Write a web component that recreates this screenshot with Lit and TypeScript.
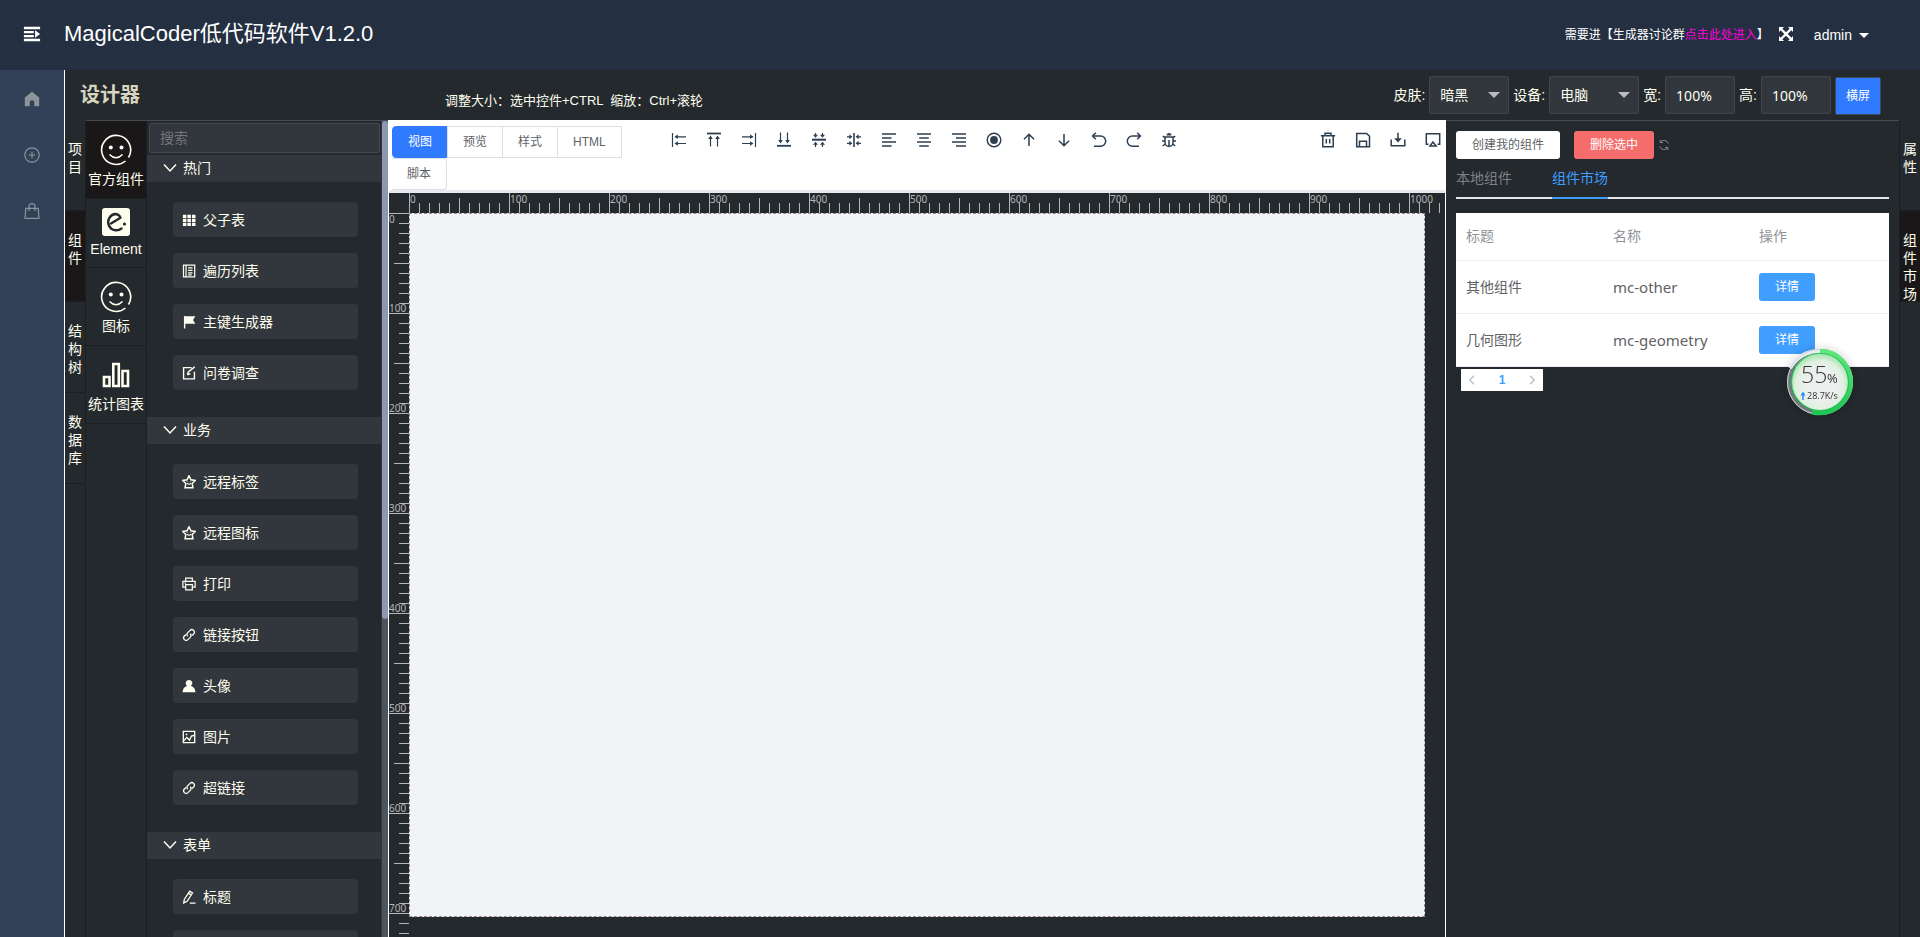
import { LitElement, html, css, svg, nothing } from "lit";
import { customElement, state } from "lit/decorators.js";
import { classMap } from "lit/directives/class-map.js";

const glyphs: Record<string, unknown> = {
  fold: svg`<path d="M1 1.5h18v2.8H1zM1 6.2h11v2.6H1zM1 10.6h11v2.6H1zM1 14.8h18v2.8H1zM13.4 5.4l5.6 4.2-5.6 4.2z" fill="currentColor" stroke="none"/>`,
  home: svg`<path d="M8 .8L15.2 6.6V15.200H10.200V10.600Q8 8 5.800 10.600V15.200H.8V6.600z" fill="currentColor" stroke="none"/>`,
  plus: svg`<circle cx="8" cy="8" r="7.200"/><path d="M8 4.700v6.600M4.700 8h6.600"/>`,
  bag: svg`<path d="M1.800 5.300h12.400l.8 10H1z"/><path d="M5 8V3.600a3 3 0 0 1 6 0V8"/>`,
  full: svg`<path d="M1 1h5L4.300 2.700 8 6.300l3.700-3.600L10 1h5v5l-1.700-1.700L9.700 8l3.600 3.700L15 10v5h-5l1.700-1.700L8 9.700l-3.700 3.600L6 15H1v-5l1.700 1.700L6.300 8 2.700 4.300 1 6z" fill="currentColor" stroke="none"/>`,
  chevron: svg`<path d="M2 4.500l6 6.500 6-6.500" stroke-width="1.500"/>`,
  grid: svg`<path d="M1 2h4v3.600H1zM6.200 2h4v3.600h-4zM11.400 2h4v3.600h-4zM1 6.600h4v3.600H1zM6.200 6.600h4v3.600h-4zM11.400 6.600h4v3.600h-4zM1 11.200h4v3.600H1zM6.200 11.200h4v3.600h-4zM11.400 11.200h4v3.600h-4z" fill="currentColor" stroke="none"/>`,
  list: svg`<path d="M1.700 1.200h12.800v13.600H1.700zM4.600 1.200v13.600M7 4.500h5M7 7.300h5M7 10.100h5M7 12.400h4" stroke-width="1.400"/>`,
  flag: svg`<path d="M2.200 1h1.600v14.500H2.200zM3.800 1.500h11.400l-2.600 4.300 2.600 4.300H3.800z" fill="currentColor" stroke="none"/>`,
  edit: svg`<path d="M11 1.900H1.800v12.800h12.400V6.500M6.200 9.600l1-2.800L14.600 1M6 10.200l3.600-1.400" stroke-width="1.600"/>`,
  star: svg`<path d="M8 .8l2.200 4.600 5 .8-3.600 3.500.9 5H3.500l.9-5L.8 6.200l5-.8z" stroke-width="1.700"/><path d="M5.700 9.300q2.300 2.400 4.600 0M6 7.300v.8M10 7.300v.8" stroke-width="1.300"/>`,
  print: svg`<path d="M4.200 5V1.200h7.600V5M4.200 11.500H1V5h14v6.500h-3.200M4.200 8.800h7.600v6H4.200zM3 7h1.500" stroke-width="1.400"/>`,
  link: svg`<path d="M6.600 9.400a3 3 0 0 1 0-4.100l2.600-2.600a2.900 2.900 0 0 1 4.100 4.100l-1.700 1.700M9.400 6.600a3 3 0 0 1 0 4.100l-2.600 2.600a2.900 2.900 0 0 1-4.100-4.100l1.700-1.700" stroke-width="1.500"/>`,
  person: svg`<path d="M8 1a3.900 3.900 0 0 1 2.300 7C13 8.800 15.200 11 15.400 15H.6C.8 11 3 8.800 5.700 8A3.900 3.900 0 0 1 8 1z" fill="currentColor" stroke="none"/>`,
  image: svg`<path d="M1.500 1.500h13v13h-13zM2 12.500l3.400-4 3.200 3 2.200-4.500L14 6" stroke-width="1.500"/><circle cx="5.200" cy="5" r="1" fill="currentColor" stroke="none"/>`,
  pen: svg`<path d="M2 14.800l.6-4L8.800 1.400l3.200 2.100-6.200 9.400zM7.400 3.600l3.200 2.100M9 15h6.500" stroke-width="1.500"/>`,
  alignLeft: svg`<path d="M1.500 1v14M4.500 4.800H15M4.500 11.500H15" /><path d="M3.500 4.800l3.400-2.300v4.600zM3.500 11.500l3.400-2.300v4.600z" fill="currentColor" stroke="none"/>`,
  alignTop: svg`<path d="M1 1.500h14" stroke-width="1.800"/><path d="M4.500 5v9.500M11.500 5v9.500"/><path d="M4.500 3.600L2.200 7h4.600zM11.500 3.600L9.200 7h4.600z" fill="currentColor" stroke="none"/>`,
  alignRight: svg`<path d="M14.500 1v14M1 4.800h10.500M1 11.500h10.500"/><path d="M12.500 4.800L9.100 2.500v4.600zM12.500 11.500L9.100 9.200v4.600z" fill="currentColor" stroke="none"/>`,
  alignBottom: svg`<path d="M1 13.800h14" stroke-width="1.800"/><path d="M4.500.5V10M11.500.5V10"/><path d="M4.500 11.400L2.200 8h4.600zM11.500 11.400L9.200 8h4.600z" fill="currentColor" stroke="none"/>`,
  midH: svg`<path d="M1 7.700h14" stroke-width="2"/><path d="M4.500 1v3M11.500 1v3M4.500 15v-3M11.500 15v-3"/><path d="M4.500 5.800L2 2.800h5zM11.500 5.800L9 2.800h5zM4.500 9.800l-2.500 3h5zM11.500 9.800l-2.500 3h5z" fill="currentColor" stroke="none"/>`,
  midV: svg`<path d="M8 1v14" stroke-width="1.600"/><path d="M1 4.800h3M1 11.300h3M15 4.800h-3M15 11.300h-3"/><path d="M6.400 4.800l-3-2.500v5zM6.400 11.300l-3-2.500v5zM9.600 4.800l3-2.500v5zM9.600 11.300l3-2.500v5z" fill="currentColor" stroke="none"/>`,
  textLeft: svg`<path d="M1 2h14M1 6h9.500M1 10h14M1 14h9.500" stroke-width="1.500"/>`,
  textCenter: svg`<path d="M1 2h14M3.200 6h9.600M1 10h14M3.200 14h9.600" stroke-width="1.500"/>`,
  textRight: svg`<path d="M1 2h14M5 6h10M1 10h14M5 14h10" stroke-width="1.500"/>`,
  record: svg`<circle cx="8" cy="8" r="6.800" stroke-width="1.400"/><circle cx="8" cy="8" r="3.900" fill="currentColor" stroke="none"/>`,
  up: svg`<path d="M8 14V2.500M3 7.300l5-5 5 5" stroke-width="1.500"/>`,
  down: svg`<path d="M8 2v11.500M3 8.700l5 5 5-5" stroke-width="1.500"/>`,
  undo: svg`<path d="M4.800.8L1.600 4l3.200 3.200M2 4h7.600a5.100 5.100 0 0 1 0 10.200H3" stroke-width="1.500"/>`,
  redo: svg`<path d="M11.200.8L14.400 4l-3.200 3.200M14 4H6.400a5.100 5.100 0 0 0 0 10.200H13" stroke-width="1.500"/>`,
  bug: svg`<path d="M5.500 3.600a2.500 2.500 0 0 1 5 0z" fill="currentColor" stroke="none"/><path d="M4 5h8v5.500a4 4 0 0 1-8 0zM1.800 4l2.200 1.800M14.200 4L12 5.800M1 9h3M12 9h3M1.800 14l2.400-2M14.200 14l-2.400-2M8 8v6" stroke-width="1.500"/>`,
  trash: svg`<path d="M.8 3.700h14.400M5 3.500V1.200h6v2.300M2.800 3.700v11h10.400v-11M6.300 7v4.500M9.700 7v4.500" stroke-width="1.500"/>`,
  save: svg`<path d="M1.700 1.500h10l2.800 2.800v10.400H1.700zM4.500 14.500V9.200h7v5.300" stroke-width="1.500"/>`,
  download: svg`<path d="M1.200 7.500v6.200h13.600V7.500M8 .8V7" stroke-width="1.500"/><path d="M8 10.500L4.200 6.300h7.600z" fill="currentColor" stroke="none"/>`,
  screen: svg`<path d="M3.500 12.300H1.300V1.800h13.400v10.500h-2.200" stroke-width="1.500"/><path d="M8 10l3.100 4H4.900z" stroke-width="1.500"/>`,
  refresh: svg`<path d="M2.200 9.800A6 6 0 0 0 13 11.400M13.800 6.200A6 6 0 0 0 3 4.600M3 1.200v3.600h3.600M13 14.800v-3.600H9.400" stroke-width="1.200"/>`,
  prev: svg`<path d="M10.500 2.500L5 8l5.500 5.500" stroke-width="2"/>`,
  next: svg`<path d="M5.500 2.500L11 8l-5.500 5.500" stroke-width="2"/>`,
};

const icon = (name: string, cls = "i16") => html`<svg
  class=${cls}
  viewBox=${name === "fold" ? "0 0 20 19" : "0 0 16 16"}
  fill="none"
  stroke="currentColor"
  stroke-width="1.2"
  aria-hidden="true"
>${glyphs[name]}</svg>`;

const smile = html`<svg class="kit-icon" viewBox="0 0 32 32" fill="none" stroke="currentColor" stroke-width="1.600" aria-hidden="true">
  <path d="M25.500 27A14.500 14.500 0 1 1 28.500 23.500"/><path d="M9.500 20.500q6.500 6.500 13 0"/>
  <circle cx="10.800" cy="13.500" r="2" fill="currentColor" stroke="none"/><circle cx="21.500" cy="13.500" r="2" fill="currentColor" stroke="none"/>
</svg>`;
const elementMark = html`<svg class="kit-icon small" viewBox="0 0 28 28" aria-hidden="true">
  <rect width="28" height="28" rx="3" fill="currentColor"/>
  <path d="M9 15.500L18.500 9.800Q17 6 13 6A8.200 8.200 0 1 0 19.500 20.500" fill="none" stroke="#24292d" stroke-width="2.400" stroke-linecap="round" stroke-linejoin="round"/>
  <circle cx="22.500" cy="16" r="1.600" fill="#24292d"/>
</svg>`;
const bars = html`<svg class="kit-icon" viewBox="0 0 32 32" fill="none" stroke="currentColor" stroke-width="2.600" aria-hidden="true">
  <path d="M4 18h5.500v9H4zM13.300 5h5.500v22h-5.500zM22.500 12H28v15h-5.500z"/>
</svg>`;

@customElement("app-root")
export class AppRoot extends LitElement {
  @state() private view = "视图";
  @state() private closed: string[] = [];
  @state() private across = 0;
  @state() private down = 0;

  private watcher = new ResizeObserver(() => this.measure());

  private views = ["视图", "预览", "样式", "HTML", "脚本"];
  private tools = [
    ["alignLeft", "左对齐"], ["alignTop", "上对齐"], ["alignRight", "右对齐"], ["alignBottom", "下对齐"],
    ["midH", "垂直居中"], ["midV", "水平居中"], ["textLeft", "文字居左"], ["textCenter", "文字居中"],
    ["textRight", "文字居右"], ["record", "选中"], ["up", "上移"], ["down", "下移"],
    ["undo", "撤销"], ["redo", "重做"], ["bug", "调试"],
  ];
  private files = [["trash", "清空"], ["save", "保存"], ["download", "下载"], ["screen", "预览"]];
  private kits = [
    { name: "官方组件", art: smile, on: true },
    { name: "Element", art: elementMark, on: false },
    { name: "图标", art: smile, on: false },
    { name: "统计图表", art: bars, on: false },
  ];
  private groups = [
    { name: "热门", items: [["grid", "父子表"], ["list", "遍历列表"], ["flag", "主键生成器"], ["edit", "问卷调查"]] },
    {
      name: "业务",
      items: [["star", "远程标签"], ["star", "远程图标"], ["print", "打印"], ["link", "链接按钮"], ["person", "头像"], ["image", "图片"], ["link", "超链接"]],
    },
    { name: "表单", items: [["pen", "标题"], ["", ""]] },
  ];
  private rows = [["其他组件", "mc-other"], ["几何图形", "mc-geometry"]];

  static styles = css`
    :host { display: block; height: 100vh; font: 14px/18px "Liberation Sans", "Noto Sans CJK SC", sans-serif; color: #fffff0; }
    * { box-sizing: border-box; }
    button, input, select { font: inherit; color: inherit; margin: 0; padding: 0; border: 0; background: none; border-radius: 0; }
    button { cursor: pointer; }
    svg { display: block; flex: none; }
    .i14 { width: 14px; height: 14px; }
    .i16 { width: 16px; height: 16px; }
    .i18 { width: 18px; height: 18px; }
    .i12 { width: 12px; height: 12px; }
    .page { height: 100%; display: flex; flex-direction: column; overflow: hidden; background: #24292d; }

    .top { flex: none; height: 70px; background: #242f42; color: #fff; display: flex; align-items: center; padding: 0 51px 2px 23px; }
    .brand { margin: 0 auto 0 23px; font-size: 22px; line-height: 30px; font-weight: 400; }
    .notice { font-size: 12px; padding-top: 2px; }
    .notice a { color: #f0d; text-decoration: none; }
    .top .max { margin: 0 20px 0 9px; }
    .user { display: flex; align-items: center; gap: 7px; padding-top: 2px; }
    .caret { border: 5px solid transparent; border-top-color: #fff; border-bottom: 0; }

    .body { flex: 1; min-height: 0; display: flex; }
    .nav { flex: none; width: 64px; padding-top: 1px; background: #324157; color: #909399; display: flex; flex-direction: column; }
    .nav a { height: 56px; display: grid; place-items: center; color: inherit; }
    .designer { flex: 1; min-width: 0; border-left: 1px solid #fff; display: flex; flex-direction: column; }
    .bar { flex: none; height: 50px; display: flex; align-items: center; gap: 4px; padding: 0 39px 0 15px; }
    .bar h1 { margin: 0; width: 300px; font-size: 20px; line-height: 26px; color: #d8d5c0; }
    .tip { margin: 12px auto 0 0; padding-left: 61px; font-size: 13px; white-space: pre; }
    .pick { position: relative; }
    .pick::after { content: ""; position: absolute; right: 9px; top: 16px; border: 6px solid transparent; border-top-color: #bbb; border-bottom: 0; pointer-events: none; }
    .field { height: 38px; background: #32363d; border: 1px solid #414549; border-radius: 2px; padding: 0 10px; appearance: none; display: block; }
    input.field { font-family: "Noto Sans", sans-serif; }
    .w70 { width: 70px; }
    .w80 { width: 80px; }
    .w90 { width: 90px; }
    .wide { width: 46px; height: 38px; margin-top: 2px; font-size: 12px; color: #fff; background: #307aff; border: 1px solid #3c4a5c; border-radius: 2px; }

    .work { flex: 1; min-height: 0; display: flex; }
    .side { flex: none; width: 21px; border-right: 1px solid #1b1f21; }
    .side.right { border-right: 0; border-left: 1px solid #1b1f21; }
    .side button { width: 20px; height: 91px; padding: 20px 3px 0; text-align: center; border-bottom: 1px solid #1b1f21; display: flex; align-items: flex-start; line-height: 18px; word-break: break-all; }
    .side button.on { background: #191717; }

    .kits { flex: none; width: 61px; border-top: 1px solid #484b50; border-right: 1px solid #1b1f21; }
    .kits button { width: 100%; height: 78px; padding-top: 2px; display: flex; flex-direction: column; align-items: center; justify-content: center; gap: 4px; border-bottom: 1px solid #1b1f21; white-space: nowrap; }
    .kits button.low { height: 69px; padding-top: 0; }
    .kits button.on { background: #191717; }
    .kit-icon { width: 32px; height: 32px; }
    .kit-icon.small { width: 28px; height: 28px; }

    .parts { flex: none; width: 241px; border-top: 1px solid #484b50; display: flex; }
    .list { flex: 1; overflow: hidden; border-right: 1px solid #32363d; }
    .search { display: block; width: calc(100% - 3px); height: 30px; margin: 2px; padding: 0 10px; background: #32363d; border: 1px solid #44484d; border-radius: 2px; }
    .search::placeholder { color: #777; opacity: 1; }
    .fold { width: 100%; height: 27px; background: #32363d; display: flex; align-items: center; gap: 5px; padding: 0 0 2px 15px; }
    .items { padding: 20px 23px 27px 26px; display: grid; gap: 16px; }
    .part { height: 35px; background: #32363d; border-radius: 4px; display: flex; align-items: center; gap: 7px; padding-left: 9px; }
    .track { flex: none; width: 6px; background: #4b555b; }
    .thumb { height: 61%; background: #8c97b0; border-radius: 4px; }

    .stage { flex: 1; min-width: 0; border: 1px solid #fff; border-width: 0 1px; display: flex; flex-direction: column; }
    .tools { flex: none; background: #fff; color: #2c3e50; border-bottom: 3px solid #e6eaee; display: flex; padding: 6px 4px 0 3px; }
    .views { flex: 0 0 25%; display: flex; flex-wrap: wrap; margin-right: 17px; }
    .views button { height: 32px; padding: 0 15px; font-size: 12px; color: #606266; border: 1px solid #dcdfe6; margin-right: -1px; }
    .views button:first-child { border-radius: 4px 0 0 4px; }
    .views button:last-child { border-radius: 0 4px 4px 0; border-left: 0; }
    .views button.on { background: #307aff; border-color: #307aff; color: #fff; }
    .strip { display: flex; gap: 19px; height: 28px; align-items: center; }
    .strip.end { margin-left: auto; }
    .board { flex: 1; min-height: 0; display: grid; grid-template: 20px minmax(0, 1fr) / 20px minmax(0, 1fr); font: 10px/10px "Noto Sans", sans-serif; color: #b4b6b8; }
    .ruler { overflow: hidden; display: flex; background-repeat: no-repeat; }
    .ruler.x {
      grid-column: 2;
      background-image: repeating-linear-gradient(90deg, #b4b6b8 0 1px, transparent 1px 10px), repeating-linear-gradient(90deg, #b4b6b8 0 1px, transparent 1px 50px), repeating-linear-gradient(90deg, #b4b6b8 0 1px, transparent 1px 100px);
      background-size: 100% 10px, 100% 15px, 100% 20px;
      background-position: bottom;
    }
    .ruler.y {
      flex-direction: column;
      background-image: repeating-linear-gradient(#b4b6b8 0 1px, transparent 1px 10px), repeating-linear-gradient(#b4b6b8 0 1px, transparent 1px 50px), repeating-linear-gradient(#b4b6b8 0 1px, transparent 1px 100px);
      background-size: 10px 100%, 15px 100%, 20px 100%;
      background-position: right;
    }
    .ruler.x span { flex: 0 0 100px; padding: 1px 0 0 1px; }
    .ruler.y div { flex: 0 0 100px; padding-top: 1px; display: flex; flex-direction: column; }
    .ruler.y .end { margin-top: auto; }
    .canvas { background: #f1f3f7; border: 1px dashed #988; margin: 0 20px 20px 0; }

    .props { flex: none; width: 453px; border-top: 1px solid #484b50; padding: 10px; }
    .acts { display: flex; align-items: center; gap: 14px; }
    .btn { height: 28px; padding: 0 16px; font-size: 12px; border-radius: 3px; background: #fff; color: #606266; }
    .btn.red { background: #f56c6c; color: #fff; }
    .btn.blue { background: #409eff; color: #fff; display: block; }
    .reload { margin-left: -10px; color: #909399; }
    .tabs { display: flex; gap: 40px; border-bottom: 2px solid #e4e7ed; height: 40px; margin-bottom: 14px; }
    .tabs button { height: 40px; color: #7d8086; border-bottom: 2px solid transparent; }
    .tabs button.on { color: #409eff; border-color: #409eff; }
    table { width: 100%; table-layout: fixed; border-collapse: collapse; background: #fff; color: #606266; }
    th { height: 47px; font-weight: 400; color: #909399; }
    td { height: 53px; }
    th, td { text-align: left; padding: 0 10px; border-bottom: 1px solid #ebeef5; }
    .c1 { width: 147px; }
    .c2 { width: 146px; }
    .code { font: 15px/18px "Noto Sans", sans-serif; }
    .pager { display: flex; align-items: center; margin: 2px 0 0 5px; background: #fff; height: 22px; width: 82px; justify-content: space-between; padding: 0 5px; color: #c0c4cc; }
    .pager b { font-size: 12px; color: #409eff; }

    .meter { position: fixed; right: 58px; top: 340px; width: 84px; height: 84px; }
    .meter text { font-family: "Open Sans", sans-serif; fill: #333; }
    .num { font-size: 23px; font-weight: 300; }
    .pct { font-size: 13px; }
    .rate { font-size: 9px; }
  `;

  firstUpdated() {
    this.watcher.observe(this.renderRoot.querySelector(".board")!);
    this.measure();
  }

  disconnectedCallback() {
    super.disconnectedCallback();
    this.watcher.disconnect();
  }

  private measure() {
    const board = this.renderRoot.querySelector(".board") as HTMLElement;
    this.across = Math.ceil((board.clientWidth - 50) / 100);
    this.down = Math.floor((board.clientHeight - 20) / 100);
  }

  private toggle(name: string) {
    this.closed = this.closed.includes(name) ? this.closed.filter((n) => n !== name) : [...this.closed, name];
  }

  private sideTabs(names: string[], active: string, cls: string) {
    return html`<nav class="side ${cls}">
      ${names.map((n) => html`<button class=${classMap({ on: n === active })}>${n}</button>`)}
    </nav>`;
  }

  private parts() {
    return html`<section class="parts">
      <div class="list">
        <input class="search" type="text" placeholder="搜索" aria-label="搜索" />
        ${this.groups.map((g) => html`
          <button class="fold" @click=${() => this.toggle(g.name)}>${icon("chevron")}${g.name}</button>
          ${this.closed.includes(g.name) ? nothing : html`<div class="items">
            ${g.items.map(([i, n]) => html`<button class="part">${icon(i, "i14")}${n}</button>`)}
          </div>`}
        `)}
      </div>
      <div class="track"><div class="thumb"></div></div>
    </section>`;
  }

  private stage() {
    const marks = (n: number) => Array.from({ length: n }, (_, i) => i * 100);
    return html`<main class="stage">
      <div class="tools">
        <div class="views">
          ${this.views.map((v) => html`<button class=${classMap({ on: v === this.view })} @click=${() => (this.view = v)}>${v}</button>`)}
        </div>
        <div class="strip">${this.tools.map(([i, t]) => html`<button aria-label=${t}>${icon(i)}</button>`)}</div>
        <div class="strip end">${this.files.map(([i, t]) => html`<button aria-label=${t}>${icon(i)}</button>`)}</div>
      </div>
      <div class="board">
        <div class="ruler x">${marks(this.across).map((m) => html`<span>${m}</span>`)}</div>
        <div class="ruler y">
          ${marks(this.down).map((m) => html`<div>${m === 0 ? html`<span>0</span>` : nothing}<span class="end">${m + 100}</span></div>`)}
        </div>
        <div class="canvas"></div>
      </div>
    </main>`;
  }

  private props() {
    return html`<aside class="props">
      <div class="acts">
        <button class="btn">创建我的组件</button>
        <button class="btn red">删除选中</button>
        <button class="reload" aria-label="刷新">${icon("refresh", "i12")}</button>
      </div>
      <div class="tabs"><button>本地组件</button><button class="on">组件市场</button></div>
      <table>
        <thead><tr><th class="c1">标题</th><th class="c2">名称</th><th>操作</th></tr></thead>
        <tbody>
          ${this.rows.map(([t, c]) => html`<tr><td>${t}</td><td class="code">${c}</td><td><button class="btn blue">详情</button></td></tr>`)}
        </tbody>
      </table>
      <div class="pager">
        <button aria-label="上一页">${icon("prev", "i12")}</button><b>1</b><button aria-label="下一页">${icon("next", "i12")}</button>
      </div>
    </aside>`;
  }

  private meter() {
    return html`<svg class="meter" viewBox="0 0 84 84" role="img" aria-label="55%">
      <defs>
        <radialGradient id="face" cy="0.55"><stop offset="0.5" stop-color="#eef0ef"/><stop offset="0.85" stop-color="#e0f0e0"/><stop offset="1" stop-color="#b4e8bc"/></radialGradient>
        <radialGradient id="halo"><stop offset="0.75" stop-color="#000" stop-opacity="0.1"/><stop offset="1" stop-color="#000" stop-opacity="0"/></radialGradient>
        <linearGradient id="arc" x2="0" y2="1"><stop stop-color="#5ee87a"/><stop offset="1" stop-color="#1fc653"/></linearGradient>
      </defs>
      <circle cx="42" cy="42" r="41" fill="url(#halo)"/>
      <circle cx="42" cy="42" r="31" fill="none" stroke="#75797e" stroke-width="4"/>
      <path d="M12 28A33 33 0 0 1 42 11" fill="none" stroke="#e8eef4" stroke-width="4"/>
      <circle cx="42" cy="42" r="32.500" fill="none" stroke="#d0d2d4"/>
      <path d="M42 11a31 31 0 1 1-8 61" fill="none" stroke="url(#arc)" stroke-width="4.500"/>
      <circle cx="42" cy="42" r="28.500" fill="url(#face)" stroke="#22c556" stroke-width="1.200"/>
      <text class="num" x="23" y="43">55</text><text class="pct" x="49" y="43">%</text>
      <path d="M25 60v-6" stroke="#2d8cf0" stroke-width="1.500"/><path d="M25 51.500l-2.500 4h5z" fill="#2d8cf0"/>
      <text class="rate" x="29" y="59">28.7K/s</text>
    </svg>`;
  }

  render() {
    return html`<div class="page">
      <header class="top">
        <button aria-label="折叠菜单">${icon("fold", "i18")}</button>
        <p class="brand">MagicalCoder低代码软件V1.2.0</p>
        <span class="notice">需要进【生成器讨论群<a href="#group">点击此处进入</a>】</span>
        <button class="max" aria-label="全屏">${icon("full")}</button>
        <button class="user">admin<span class="caret"></span></button>
      </header>
      <div class="body">
        <nav class="nav">
          <a href="#home" aria-label="首页">${icon("home")}</a>
          <a href="#add" aria-label="新增">${icon("plus")}</a>
          <a href="#shop" aria-label="商城">${icon("bag")}</a>
        </nav>
        <div class="designer">
          <div class="bar">
            <h1>设计器</h1>
            <p class="tip">调整大小：选中控件+CTRL  缩放：Ctrl+滚轮</p>
            <label for="skin">皮肤:</label>
            <div class="pick"><select id="skin" class="field w80"><option>暗黑</option></select></div>
            <label for="device">设备:</label>
            <div class="pick"><select id="device" class="field w90"><option>电脑</option></select></div>
            <label for="w">宽:</label><input id="w" class="field w70" value="100%" />
            <label for="h">高:</label><input id="h" class="field w70" value="100%" />
            <button class="wide">横屏</button>
          </div>
          <div class="work">
            ${this.sideTabs(["项目", "组件", "结构树", "数据库"], "组件", "")}
            <nav class="kits">
              ${this.kits.map((k) => html`<button class=${classMap({ on: k.on, low: k.name === "Element" })}>${k.art}${k.name}</button>`)}
            </nav>
            ${this.parts()} ${this.stage()} ${this.props()}
            ${this.sideTabs(["属性", "组件市场"], "组件市场", "right")}
          </div>
        </div>
      </div>
      ${this.meter()}
    </div>`;
  }
}
